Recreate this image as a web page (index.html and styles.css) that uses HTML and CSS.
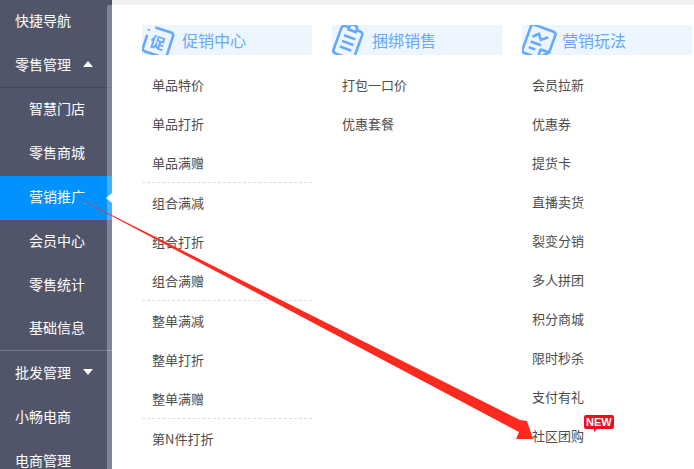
FILE: index.html
```html
<!DOCTYPE html>
<html lang="zh-CN">
<head>
    <meta charset="UTF-8">
    <meta name="viewport" content="width=device-width, initial-scale=1.0">
    <title>营销推广</title>
    <link rel="stylesheet" href="styles.css">
</head>
<body>
    <div class="page">
        <nav class="sidebar">
            <ul class="menu">
                <li class="menu-item">快捷导航</li>
                <li class="menu-item menu-open">零售管理<span class="caret caret-up"></span></li>
                <li class="menu-item sub">智慧门店</li>
                <li class="menu-item sub">零售商城</li>
                <li class="menu-item sub active">营销推广</li>
                <li class="menu-item sub">会员中心</li>
                <li class="menu-item sub">零售统计</li>
                <li class="menu-item sub last">基础信息</li>
                <li class="menu-item">批发管理<span class="caret caret-down"></span></li>
                <li class="menu-item">小畅电商</li>
                <li class="menu-item">电商管理</li>
            </ul>
            <div class="scrollbar"></div>
        </nav>

        <main class="panel">
            <section class="column">
                <h3 class="column-title">
                    <svg class="column-icon" viewBox="0 0 36 30" fill="none" stroke="#66a9fb" stroke-width="2.6">
                        <g transform="rotate(18 16 17)">
                            <path d="M9 4 H25.5 Q28.5 4 28.5 7 V27 Q28.5 30 25.5 30 H6.5 Q3.5 30 3.5 27 V13.5 M3.5 9 V7.5"/>
                            <text x="8.5" y="23.5" class="icon-glyph">促</text>
                        </g>
                    </svg>
                    促销中心
                </h3>
                <ul class="group">
                    <li>单品特价</li>
                    <li>单品打折</li>
                    <li>单品满赠</li>
                </ul>
                <ul class="group">
                    <li>组合满减</li>
                    <li>组合打折</li>
                    <li>组合满赠</li>
                </ul>
                <ul class="group">
                    <li>整单满减</li>
                    <li>整单打折</li>
                    <li>整单满赠</li>
                </ul>
                <ul class="group">
                    <li>第N件打折</li>
                </ul>
            </section>

            <section class="column">
                <h3 class="column-title">
                    <svg class="column-icon" viewBox="0 0 36 30" fill="none" stroke="#66a9fb" stroke-width="2.6">
                        <g transform="rotate(20 16 17)">
                            <path d="M11 3 H8 Q5 3 5 6 V29 Q5 32 8 32 H24 Q27 32 27 29 V6 Q27 3 24 3 H21"/>
                            <path d="M12 5 V2 Q12 -1 16 -1 Q20 -1 20 2 V5 Z"/>
                            <path d="M10 12 H22 M10 18 H22 M10 24 H22"/>
                        </g>
                    </svg>
                    捆绑销售
                </h3>
                <ul class="group">
                    <li>打包一口价</li>
                    <li>优惠套餐</li>
                </ul>
            </section>

            <section class="column">
                <h3 class="column-title">
                    <svg class="column-icon" viewBox="0 0 36 30" fill="none" stroke="#66a9fb" stroke-width="2.6">
                        <g transform="rotate(20 16 17)">
                            <path d="M7 2 H27 Q30 2 30 5 V23 L21 32 H7 Q4 32 4 29 V5 Q4 2 7 2 Z"/>
                            <path d="M21 32 V24 Q21 23 22 23 H30"/>
                            <path d="M9 14 L14 9 L18 14 L24 9"/>
                            <path d="M9 19 H20 M9 25 H16"/>
                        </g>
                    </svg>
                    营销玩法
                </h3>
                <ul class="group">
                    <li>会员拉新</li>
                    <li>优惠券</li>
                    <li>提货卡</li>
                    <li>直播卖货</li>
                    <li>裂变分销</li>
                    <li>多人拼团</li>
                    <li>积分商城</li>
                    <li>限时秒杀</li>
                    <li>支付有礼</li>
                    <li class="has-badge">社区团购<span class="badge">NEW</span></li>
                </ul>
            </section>
        </main>

        <!-- red annotation drawn over the screenshot -->
        <svg class="annotation" width="694" height="469" viewBox="0 0 694 469">
            <path d="M72 195 L520 420 L527 421 L533 439 L516 439 L519 432 Z" fill="#ff2a1f"/>
        </svg>
    </div>
</body>
</html>
```

FILE: styles.css
```css
* { box-sizing: border-box; }
html, body { margin: 0; padding: 0; }
body { font-family: "Noto Sans CJK SC", "Liberation Sans", sans-serif; background: #f0f0f0; overflow: hidden; }
ul { list-style: none; margin: 0; padding: 0; }

.page { position: relative; display: flex; width: 694px; height: 469px; overflow: hidden; }

.sidebar { display: flex; flex: none; width: 112px; height: 469px; background: #51556a; }
.menu { flex: none; width: 112px; }
.menu-item { display: flex; align-items: center; position: relative; height: 44px; padding: 0 0 4px 15px; font-size: 14px; color: #fff; }
.menu-open { border-bottom: 1px solid #44475a; }
.menu-item.sub { padding-left: 29px; }
.menu-item.last { height: 43px; margin-bottom: 1px; border-bottom: 1px solid #777a8b; }
.menu-item.active { background: #0192fe; }
.menu-item.active::after { content: ""; position: absolute; right: 0; top: 17px; z-index: 2; border: 5px solid transparent; border-right: 6px solid #fff; border-left: 0; }

.caret { margin-left: 12px; border-left: 5px solid transparent; border-right: 5px solid transparent; }
.caret-up { border-bottom: 6px solid #fff; }
.caret-down { border-top: 6px solid #fff; }

.scrollbar { position: absolute; left: 107px; top: 5px; width: 5px; height: 464px; background: rgba(255, 255, 255, 0.28); border-radius: 2px 0 0 0; }

.panel { display: flex; flex: 1; gap: 20px; margin-top: 5px; padding: 20px 0 0 30px; background: #fff; }
.column { flex: none; width: 170px; }
.column-title { display: flex; align-items: center; height: 30px; margin: 0 0 10px; padding: 0 0 1px 40px; position: relative; font-size: 16px; font-weight: normal; color: #66a9fb; background: #edf5ff; }
.column-icon { position: absolute; left: 0; top: 0; width: 36px; height: 30px; overflow: hidden; }
.icon-glyph { font-size: 15px; font-weight: bold; fill: #66a9fb; stroke: none; }

.group { border-bottom: 1px dashed #ddd; }
.group:last-child { border-bottom: 0; }
.group li { display: flex; align-items: center; height: 39px; padding: 0 0 1px 10px; font-size: 13px; color: #4d4d4d; }

.has-badge { position: relative; }
.badge { position: absolute; left: 62px; top: -1px; height: 14px; padding: 0 2px; font-size: 11px; line-height: 14px; font-weight: bold; font-family: "Liberation Sans", sans-serif; color: #fff; background: #f5091b; border-radius: 2px; }
.badge::after { content: ""; position: absolute; left: 10px; bottom: -3px; border-top: 4px solid #f5091b; border-right: 4px solid transparent; }

.annotation { position: absolute; left: 0; top: 0; pointer-events: none; }
```
